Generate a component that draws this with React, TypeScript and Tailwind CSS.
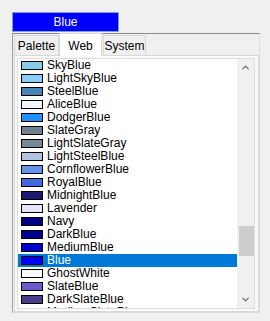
import { ChevronUp, ChevronDown } from "lucide-react";

const webColors = [
  { name: "SkyBlue", hex: "#87CEEB" },
  { name: "LightSkyBlue", hex: "#87CEFA" },
  { name: "SteelBlue", hex: "#4682B4" },
  { name: "AliceBlue", hex: "#F0F8FF" },
  { name: "DodgerBlue", hex: "#1E90FF" },
  { name: "SlateGray", hex: "#708090" },
  { name: "LightSlateGray", hex: "#778899" },
  { name: "LightSteelBlue", hex: "#B0C4DE" },
  { name: "CornflowerBlue", hex: "#6495ED" },
  { name: "RoyalBlue", hex: "#4169E1" },
  { name: "MidnightBlue", hex: "#191970" },
  { name: "Lavender", hex: "#E6E6FA" },
  { name: "Navy", hex: "#000080" },
  { name: "DarkBlue", hex: "#00008B" },
  { name: "MediumBlue", hex: "#0000CD" },
  { name: "Blue", hex: "#0000FF" },
  { name: "GhostWhite", hex: "#F8F8FF" },
  { name: "SlateBlue", hex: "#6A5ACD" },
  { name: "DarkSlateBlue", hex: "#483D8B" },
  { name: "MediumSlateBlue", hex: "#7B68EE" },
];

const selected = "Blue";

const App = () => {
  return (
    <div className="w-[270px] h-[321px] bg-[#f0f0f0] overflow-hidden font-['Liberation_Sans',Arial,sans-serif] text-[12px] text-black">
      {/* current colour preview */}
      <div className="pt-[12px] pl-[12px]">
        <div className="w-[107px] h-[20px] border border-[#7aa0cf] bg-[#0000ff] text-white flex items-center justify-center leading-none">
          Blue
        </div>
      </div>

      {/* tab control */}
      <div className="ml-[12px] mt-px w-[248px] h-[280px] border-t border-l border-t-[#8a8a8a] border-l-[#a0a0a0] border-r border-b border-r-[#dcdcdc] border-b-[#dcdcdc] flex flex-col">
        <div className="h-[21px] shrink-0 flex items-end pl-px relative z-10">
          <div className="w-[45px] h-[20px] border border-b-0 border-[#d9d9d9] bg-[#f0f0f0] flex items-center justify-center">
            Palette
          </div>
          <div className="w-[43px] h-[23px] -mb-px border border-b-0 border-[#d9d9d9] bg-white flex items-start pt-[3px] justify-center">
            Web
          </div>
          <div className="w-[43px] h-[20px] ml-px border border-b-0 border-[#d9d9d9] bg-[#f0f0f0] flex items-center justify-center">
            System
          </div>
        </div>

        <div className="flex-1 min-h-0 ml-px border border-[#d9d9d9] bg-[#fafafa] p-[2px] pr-[3px] flex flex-col">
          <div className="flex-1 min-h-0 border border-[#dcdcdc] bg-white flex overflow-hidden">
            <div className="flex-1 overflow-hidden">
              {webColors.map((c) => {
                const isSel = c.name === selected;
                return (
                  <div
                    key={c.name}
                    className={
                      isSel
                        ? "h-[13px] flex items-center bg-[#0078d7] text-white"
                        : "h-[13px] flex items-center"
                    }
                  >
                    <span
                      className="ml-[3px] w-[22px] h-[9px] border border-black shrink-0"
                      style={{ backgroundColor: c.hex }}
                    />
                    <span className="ml-[4px] leading-[13px] whitespace-nowrap">{c.name}</span>
                  </div>
                );
              })}
            </div>
            <div className="w-[17px] bg-[#f0f0f0] flex flex-col items-center">
              <div className="h-[17px] flex items-center justify-center text-[#606060]">
                <ChevronUp size={11} strokeWidth={2.5} />
              </div>
              <div className="flex-1 w-full relative">
                <div className="absolute left-[2px] right-0 top-[150px] h-[30px] bg-[#cdcdcd]" />
              </div>
              <div className="h-[17px] flex items-center justify-center text-[#606060]">
                <ChevronDown size={11} strokeWidth={2.5} />
              </div>
            </div>
          </div>
        </div>
      </div>
    </div>
  );
};

export default App;
